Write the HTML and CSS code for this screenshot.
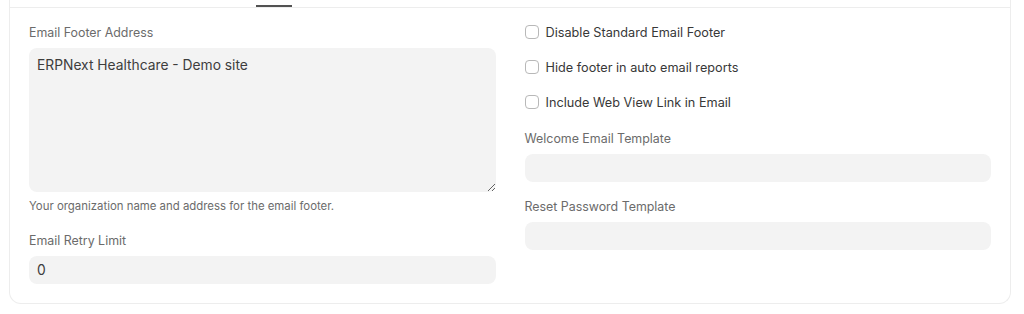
FILE: index.html
```html
<!DOCTYPE html>
<html>
<head>
    <title>System Settings - Email</title>
    <meta charset="UTF-8">
    <meta name="viewport" content="width=device-width, initial-scale=1.0">
    <link rel="stylesheet" href="styles.css">
</head>
<body>
    <div class="form-card">
        <div class="tab-bar">
            <span class="tab-active"></span>
        </div>

        <div class="section-body">
            <div class="form-column">
                <div class="form-control">
                    <label class="control-label" for="footer-address">Email Footer Address</label>
                    <textarea id="footer-address" class="input textarea">ERPNext Healthcare - Demo site</textarea>
                    <p class="help-box">Your organization name and address for the email footer.</p>
                </div>

                <div class="form-control">
                    <label class="control-label" for="retry-limit">Email Retry Limit</label>
                    <input type="text" id="retry-limit" class="input" value="0">
                </div>
            </div>

            <div class="form-column compact">
                <div class="checkbox-group">
                    <label class="checkbox">
                        <input type="checkbox">
                        <span>Disable Standard Email Footer</span>
                    </label>
                    <label class="checkbox">
                        <input type="checkbox">
                        <span>Hide footer in auto email reports</span>
                    </label>
                    <label class="checkbox">
                        <input type="checkbox">
                        <span>Include Web View Link in Email</span>
                    </label>
                </div>

                <div class="form-control">
                    <label class="control-label" for="welcome-template">Welcome Email Template</label>
                    <input type="text" id="welcome-template" class="input">
                </div>

                <div class="form-control">
                    <label class="control-label" for="reset-template">Reset Password Template</label>
                    <input type="text" id="reset-template" class="input">
                </div>
            </div>
        </div>
    </div>
</body>
</html>
```

FILE: styles.css
```css
body {
    margin: 0;
    background-color: #fff;
    font-family: Inter, "Noto Sans", sans-serif;
    color: #383838;
}
.form-card {
    margin: 0 13px 0 9px;
    border: 1px solid #ededed;
    border-top: none;
    border-radius: 0 0 12px 12px;
}
.tab-bar {
    height: 7px;
    border-bottom: 1px solid #ededed;
    position: relative;
}
.tab-active {
    position: absolute;
    left: 246px;
    top: 5px;
    width: 36px;
    height: 2px;
    background-color: #525252;
}
.section-body {
    display: grid;
    grid-template-columns: 1fr 1fr;
    column-gap: 29px;
    padding: 17px 19px 19px 19px;
}
.form-column {
    display: flex;
    flex-direction: column;
}
.form-control {
    margin-bottom: 19px;
}
.compact .form-control {
    margin-bottom: 17px;
}
.form-column .form-control:last-child {
    margin-bottom: 0;
}
.control-label {
    display: block;
    font-size: 12.4px;
    line-height: 16px;
    color: #6b6b6b;
    margin-bottom: 7px;
}
.input {
    display: block;
    width: 100%;
    height: 28px;
    box-sizing: border-box;
    padding: 6px 8px;
    border: none;
    border-radius: 8px;
    background-color: #f3f3f3;
    font-family: Inter, "Noto Sans", sans-serif;
    font-size: 13.8px;
    line-height: 16px;
    color: #3d3d3d;
    outline: none;
}
.textarea {
    height: 144px;
    padding: 9px 8px;
    resize: vertical;
}
.help-box {
    margin: 6px 0 0 0;
    font-size: 11.4px;
    line-height: 16px;
    color: #6b6b6b;
}
.checkbox-group {
    margin-top: -1px;
    margin-bottom: 21px;
}
.checkbox {
    display: flex;
    align-items: center;
    gap: 7px;
    height: 16px;
    margin-bottom: 19px;
    font-size: 12.7px;
    color: #383838;
}
.checkbox:last-child {
    margin-bottom: 0;
}
.checkbox input {
    appearance: none;
    margin: 0;
    width: 14px;
    height: 14px;
    border: 1px solid #b8b8b8;
    border-radius: 4px;
    background-color: #fff;
}
```
